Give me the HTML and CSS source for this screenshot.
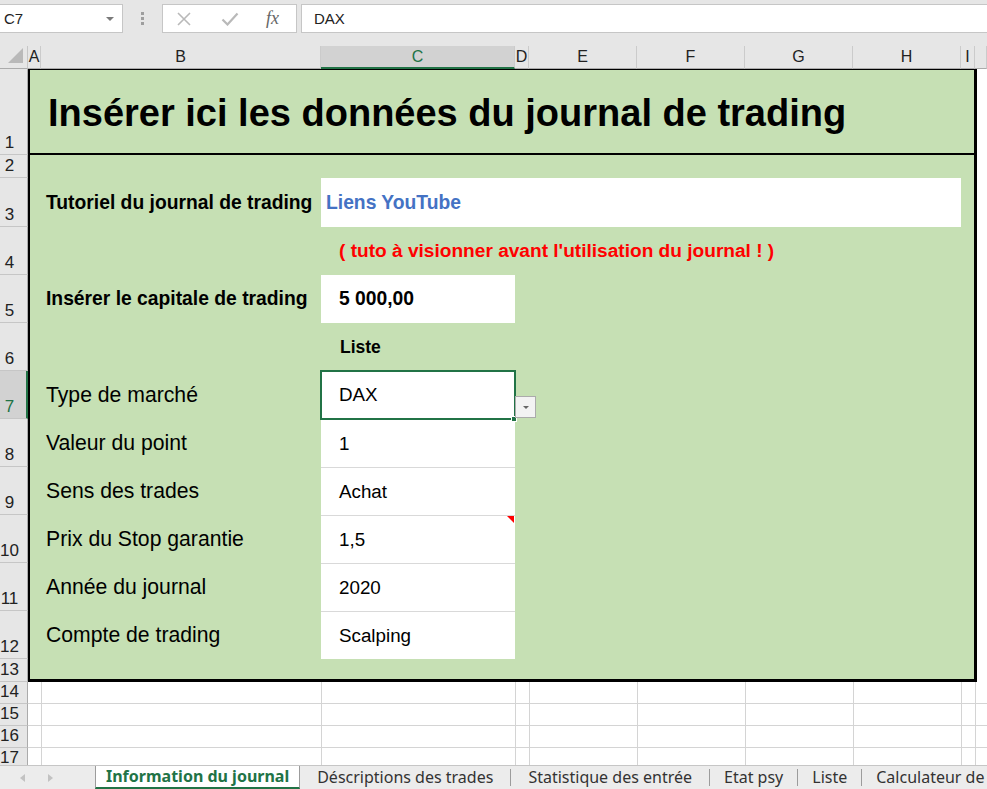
FILE: index.html
```html
<!DOCTYPE html>
<html>
<head>
    <title>Journal de trading - Information du journal</title>
    <link rel="stylesheet" href="styles.css">
</head>
<body>
    <div class="app">
        <!-- name box + formula bar -->
        <div class="formula-bar">
            <div class="name-box">
                <span>C7</span>
                <span class="caret"></span>
            </div>
            <div class="grip"><span></span><span></span><span></span></div>
            <div class="fx-box">
                <svg class="icon-cancel" width="14" height="14" viewBox="0 0 14 14">
                    <path d="M1 1L13 13M13 1L1 13" stroke="#b9b9b9" stroke-width="1.6" fill="none"/>
                </svg>
                <svg class="icon-enter" width="18" height="14" viewBox="0 0 18 14">
                    <path d="M1.5 7.5L6.5 12.5L16.5 1.5" stroke="#b9b9b9" stroke-width="2.2" fill="none"/>
                </svg>
                <span class="fx">fx</span>
            </div>
            <div class="formula-input">DAX</div>
        </div>

        <div class="sheet">
            <div class="corner"><span class="corner-tri"></span></div>

            <div class="col-heads">
                <div class="col-head w-a">A</div>
                <div class="col-head w-b">B</div>
                <div class="col-head w-c active">C</div>
                <div class="col-head w-d">D</div>
                <div class="col-head w-e">E</div>
                <div class="col-head w-e">F</div>
                <div class="col-head w-e">G</div>
                <div class="col-head w-e">H</div>
                <div class="col-head w-i">I</div>
                <div class="col-head w-j"></div>
            </div>

            <div class="row-heads">
                <div class="row-head h-title"><span>1</span></div>
                <div class="row-head h-gap"><span>2</span></div>
                <div class="row-head h-tall"><span>3</span></div>
                <div class="row-head"><span>4</span></div>
                <div class="row-head"><span>5</span></div>
                <div class="row-head"><span>6</span></div>
                <div class="row-head active"><span>7</span></div>
                <div class="row-head"><span>8</span></div>
                <div class="row-head"><span>9</span></div>
                <div class="row-head"><span>10</span></div>
                <div class="row-head"><span>11</span></div>
                <div class="row-head"><span>12</span></div>
                <div class="row-head h-gap"><span>13</span></div>
                <div class="row-head h-blank"><span>14</span></div>
                <div class="row-head h-blank"><span>15</span></div>
                <div class="row-head h-blank"><span>16</span></div>
                <div class="row-head h-blank"><span>17</span></div>
            </div>

            <div class="body">
                <div class="journal">
                    <div class="journal-title">Insérer ici les données du journal de trading</div>
                    <div class="j-gap"></div>

                    <div class="j-row tall">
                        <div class="j-label strong">Tutoriel du journal de trading</div>
                        <div class="j-value wide link">Liens YouTube</div>
                    </div>
                    <div class="j-row">
                        <div class="j-label"></div>
                        <div class="j-note">( tuto à visionner avant l'utilisation du journal ! )</div>
                    </div>
                    <div class="j-row">
                        <div class="j-label strong">Insérer le capitale de trading</div>
                        <div class="j-value strong">5 000,00</div>
                    </div>
                    <div class="j-row">
                        <div class="j-label"></div>
                        <div class="j-value plain caption">Liste</div>
                    </div>
                    <div class="j-row">
                        <div class="j-label">Type de marché</div>
                        <div class="j-value selected">
                            DAX
                            <span class="fill-handle"></span>
                            <span class="drop-btn"><span class="drop-caret"></span></span>
                        </div>
                    </div>
                    <div class="j-row">
                        <div class="j-label">Valeur du point</div>
                        <div class="j-value ruled">1</div>
                    </div>
                    <div class="j-row">
                        <div class="j-label">Sens des trades</div>
                        <div class="j-value ruled">Achat</div>
                    </div>
                    <div class="j-row">
                        <div class="j-label">Prix du Stop garantie</div>
                        <div class="j-value ruled has-comment">1,5</div>
                    </div>
                    <div class="j-row">
                        <div class="j-label">Année du journal</div>
                        <div class="j-value ruled">2020</div>
                    </div>
                    <div class="j-row">
                        <div class="j-label">Compte de trading</div>
                        <div class="j-value ruled">Scalping</div>
                    </div>
                    <div class="j-gap last"></div>
                </div>

                <div class="blank-rows">
                    <div class="blank w-a"></div>
                    <div class="blank w-b"></div>
                    <div class="blank w-c"></div>
                    <div class="blank w-d"></div>
                    <div class="blank w-e"></div>
                    <div class="blank w-e"></div>
                    <div class="blank w-e"></div>
                    <div class="blank w-e"></div>
                    <div class="blank w-i"></div>
                    <div class="blank w-j"></div>
                </div>
            </div>
        </div>

        <div class="tab-bar">
            <div class="tab-nav">
                <span class="nav-prev"></span>
                <span class="nav-next"></span>
            </div>
            <div class="tab active">Information du journal</div>
            <div class="tab">Déscriptions des trades</div>
            <span class="tab-sep"></span>
            <div class="tab">Statistique des entrée</div>
            <span class="tab-sep"></span>
            <div class="tab narrow">Etat psy</div>
            <span class="tab-sep"></span>
            <div class="tab narrow">Liste</div>
            <span class="tab-sep"></span>
            <div class="tab narrow">Calculateur de</div>
        </div>
    </div>
</body>
</html>
```

FILE: styles.css
```css
* {
    box-sizing: border-box;
}

body {
    margin: 0;
    font-family: "Liberation Sans", Arial, sans-serif;
    background-color: #fff;
    color: #000;
}

.app {
    width: 987px;
    height: 789px;
    overflow: hidden;
    display: flex;
    flex-direction: column;
}

/* ---------- formula bar ---------- */

.formula-bar {
    height: 46px;
    flex: none;
    display: flex;
    align-items: flex-start;
    padding-top: 4px;
    background-color: #e6e6e6;
}

.name-box {
    width: 123px;
    height: 29px;
    display: flex;
    align-items: center;
    justify-content: space-between;
    padding: 0 8px 0 4px;
    background-color: #fff;
    border: 1px solid #c6c6c6;
    border-left: none;
    font-size: 15px;
    color: #222;
}

.caret {
    width: 0;
    height: 0;
    border-left: 4px solid transparent;
    border-right: 4px solid transparent;
    border-top: 4px solid #7a7a7a;
}

.grip {
    width: 3px;
    margin: 8px 18px 0 18px;
    display: flex;
    flex-direction: column;
    gap: 2px;
}

.grip span {
    width: 3px;
    height: 3px;
    background-color: #9e9e9e;
}

.fx-box {
    width: 135px;
    height: 29px;
    display: flex;
    align-items: center;
    padding-left: 14px;
    background-color: #fff;
    border: 1px solid #c6c6c6;
}

.icon-enter {
    margin-left: 30px;
}

.fx {
    margin-left: 27px;
    font-family: "Liberation Serif", "Times New Roman", serif;
    font-style: italic;
    font-size: 18px;
    color: #666;
}

.formula-input {
    flex: 1;
    height: 29px;
    margin-left: 4px;
    display: flex;
    align-items: center;
    padding-left: 12px;
    background-color: #fff;
    border: 1px solid #c6c6c6;
    border-right: none;
    font-size: 15px;
    color: #222;
}

/* ---------- sheet ---------- */

.sheet {
    flex: 1;
    display: grid;
    grid-template-columns: 28px 1fr;
    grid-template-rows: 23px 1fr;
    overflow: hidden;
}

.corner {
    display: flex;
    justify-content: flex-end;
    align-items: flex-end;
    padding: 0 4px 5px 0;
    background-color: #e6e6e6;
    border-right: 1px solid #c6c6c6;
    border-bottom: 1px solid #ababab;
}

.corner-tri {
    width: 15px;
    height: 15px;
    background-color: #b9b9b9;
    clip-path: polygon(100% 0, 100% 100%, 0 100%);
}

.col-heads {
    display: flex;
    background-color: #e6e6e6;
}

.col-head {
    flex: none;
    display: flex;
    align-items: center;
    justify-content: center;
    font-size: 16px;
    color: #222;
    border-right: 1px solid #cbcbcb;
    border-bottom: 1px solid #ababab;
}

.col-head.active {
    background-color: #d2d2d2;
    color: #217346;
    border-bottom: 2px solid #217346;
}

.w-a { width: 13px; }
.w-b { width: 280px; }
.w-c { width: 194px; }
.w-d { width: 14px; }
.w-e { width: 108px; }
.w-i { width: 14px; }
.w-j { flex: 1; }

.row-heads {
    display: flex;
    flex-direction: column;
    background-color: #e6e6e6;
    overflow: hidden;
}

.row-head {
    height: 48px;
    flex: none;
    display: flex;
    align-items: flex-end;
    padding-bottom: 2px;
    font-size: 17px;
    line-height: 19px;
    color: #222;
    border-right: 1px solid #ababab;
    border-bottom: 1px solid #c6c6c6;
}

.row-head span {
    width: 19px;
    text-align: center;
}

.row-head.h-title { height: 86px; }
.row-head.h-gap { height: 23px; }
.row-head.h-tall { height: 49px; }
.row-head.h-blank { height: 22px; }

.row-head.active {
    background-color: #d2d2d2;
    color: #217346;
    border-right: 2px solid #217346;
}

.body {
    display: flex;
    flex-direction: column;
    overflow: hidden;
}

/* ---------- journal block ---------- */

.journal {
    width: 949px;
    flex: none;
    display: flex;
    flex-direction: column;
    background-color: #c6e0b4;
    border-style: solid;
    border-color: #000;
    border-width: 1px 3px 3px 2px;
}

.journal-title {
    height: 85px;
    display: flex;
    align-items: center;
    padding: 4px 0 0 18px;
    border-bottom: 2px solid #000;
    font-size: 38px;
    font-weight: bold;
}

.j-gap {
    height: 23px;
}

.j-gap.last {
    height: 20px;
}

.j-row {
    height: 48px;
    display: flex;
}

.j-row.tall {
    height: 49px;
}

.j-label {
    width: 291px;
    display: flex;
    align-items: center;
    padding-left: 16px;
    font-size: 21.2px;
}

.j-label.strong {
    font-size: 19.3px;
    font-weight: bold;
}

.j-value {
    width: 194px;
    position: relative;
    display: flex;
    align-items: center;
    padding-left: 18px;
    background-color: #fff;
    font-size: 18.8px;
}

.j-value.strong {
    font-size: 19.3px;
    font-weight: bold;
}

.j-value.wide {
    width: 640px;
    padding-left: 5px;
}

.j-value.link {
    color: #4472c4;
    font-size: 19.3px;
    font-weight: bold;
}

.j-value.plain {
    background-color: transparent;
}

.j-value.caption {
    padding-left: 19px;
    font-size: 17.5px;
    font-weight: bold;
}

.j-value.ruled {
    border-top: 1px solid #d9d9d9;
}

.j-note {
    display: flex;
    align-items: center;
    padding-left: 18px;
    color: #ff0000;
    font-size: 19.1px;
    font-weight: bold;
}

.j-value.selected {
    outline: 2px solid #217346;
    outline-offset: -1px;
    z-index: 1;
}

.fill-handle {
    position: absolute;
    left: 190px;
    top: 45px;
    width: 6px;
    height: 6px;
    background-color: #217346;
    border: 1px solid #fff;
}

.drop-btn {
    position: absolute;
    left: 194px;
    top: 25px;
    width: 21px;
    height: 22px;
    display: flex;
    align-items: center;
    justify-content: center;
    background-color: #f3f3f3;
    border: 1px solid #ababab;
}

.drop-caret {
    width: 0;
    height: 0;
    border-left: 3px solid transparent;
    border-right: 3px solid transparent;
    border-top: 3px solid #666;
}

.has-comment::after {
    content: "";
    position: absolute;
    top: 0;
    right: 1px;
    width: 7px;
    height: 7px;
    background-color: #ff0000;
    clip-path: polygon(0 0, 100% 0, 100% 100%);
}

/* empty rows under the block */

.blank-rows {
    flex: 1;
    display: flex;
}

.blank {
    flex: none;
    background-image: repeating-linear-gradient(to bottom, transparent 0, transparent 21px, #d4d4d4 21px, #d4d4d4 22px);
}

.blank.w-j {
    flex: 1;
}

.blank + .blank {
    border-left: 1px solid #d4d4d4;
}

/* ---------- sheet tabs ---------- */

.tab-bar {
    height: 24px;
    flex: none;
    display: flex;
    align-items: stretch;
    background-color: #ececec;
    border-top: 1px solid #c6c6c6;
    font-family: "Noto Sans", "Open Sans", sans-serif;
    font-size: 16px;
    white-space: nowrap;
    overflow: hidden;
}

.tab-nav {
    width: 95px;
    flex: none;
    display: flex;
    align-items: center;
    padding-left: 20px;
    gap: 23px;
}

.nav-prev,
.nav-next {
    width: 0;
    height: 0;
    border-top: 4px solid transparent;
    border-bottom: 4px solid transparent;
}

.nav-prev {
    border-right: 5px solid #c2c2c2;
}

.nav-next {
    border-left: 5px solid #c2c2c2;
}

.tab {
    flex: none;
    display: flex;
    align-items: center;
    padding: 0 17px 2px;
    color: #333;
}

.tab.narrow {
    padding: 0 14px 2px;
}

.tab.active {
    padding: 0 10px 1px 10px;
    margin-top: -1px;
    background-color: #fff;
    color: #217346;
    font-weight: bold;
    border-left: 1px solid #9c9c9c;
    border-right: 1px solid #9c9c9c;
    border-bottom: 2px solid #217346;
}

.tab-sep {
    width: 1px;
    flex: none;
    margin: 3px 0;
    background-color: #9c9c9c;
}
```
